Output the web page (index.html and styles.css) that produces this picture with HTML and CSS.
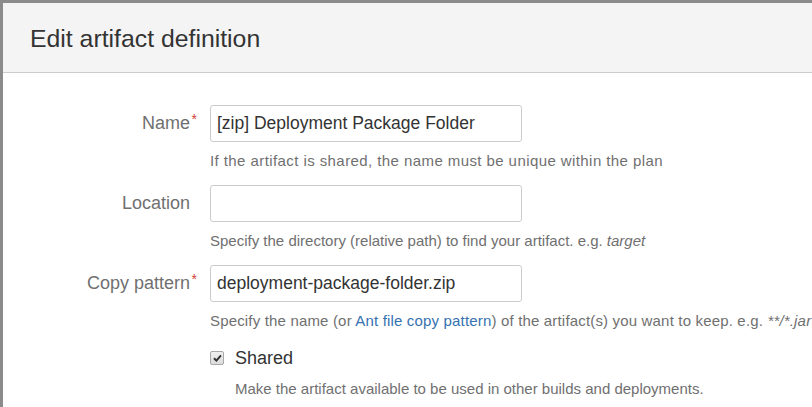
FILE: index.html
```html
<!DOCTYPE html>
<html>
<head>
<meta charset="utf-8">
<link rel="stylesheet" href="styles.css">
</head>
<body>
<div class="dialog">
  <div class="dialog-header">
    <h2 class="dialog-title">Edit artifact definition</h2>
  </div>
  <div class="dialog-body">
    <div class="field-group">
      <label class="field-label">Name<span class="required">*</span></label>
      <div class="field">
        <div class="text-input">[zip] Deployment Package Folder</div>
        <div class="description wide">If the artifact is shared, the name must be unique within the plan</div>
      </div>
    </div>
    <div class="field-group">
      <label class="field-label">Location</label>
      <div class="field">
        <div class="text-input"></div>
        <div class="description">Specify the directory (relative path) to find your artifact. e.g. <em>target</em></div>
      </div>
    </div>
    <div class="field-group">
      <label class="field-label">Copy pattern<span class="required">*</span></label>
      <div class="field">
        <div class="text-input">deployment-package-folder.zip</div>
        <div class="description mid">Specify the name (or <a class="link" href="#">Ant file copy pattern</a>) of the artifact(s) you want to keep. e.g. <em>**/*.jar</em></div>
      </div>
    </div>
    <div class="field-group">
      <div class="field-label"></div>
      <div class="field">
        <div class="checkbox-row">
          <span class="checkbox"><svg width="9" height="8" viewBox="0 0 9 8"><path d="M1 4.2 L3.4 6.6 L8 1.4" fill="none" stroke="#333" stroke-width="2"/></svg></span>
          <span class="checkbox-label">Shared</span>
        </div>
        <div class="description indent">Make the artifact available to be used in other builds and deployments.</div>
      </div>
    </div>
  </div>
</div>
</body>
</html>
```

FILE: styles.css
```css
html, body {
  margin: 0;
  padding: 0;
  height: 100%;
  overflow: hidden;
}
body {
  background: #8b8b8b;
  font-family: "Liberation Sans", Arial, sans-serif;
}
.dialog {
  margin: 3px 0 0 3px;
  background: #fff;
  height: 404px;
}
.dialog-header {
  background: #f4f4f4;
  height: 69px;
  border-bottom: 1px solid #cccccc;
  display: flex;
  align-items: center;
  padding-left: 27px;
}
.dialog-title {
  margin: 0;
  font-weight: normal;
  font-size: 24.8px;
  color: #333;
  position: relative;
  top: 1px;
}
.dialog-body {
  padding-top: 32px;
}
.field-group {
  display: flex;
  margin-bottom: 14px;
}
.field-label {
  width: 187px;
  flex: none;
  text-align: right;
  font-size: 18px;
  color: #707070;
  line-height: 37px;
  position: relative;
  padding-right: 20px;
  box-sizing: content-box;
}
.required {
  position: absolute;
  right: 13px;
  top: -4px;
  color: #d04437;
  font-size: 14px;
}
.field {
  flex: 1;
}
.text-input {
  width: 312px;
  height: 37px;
  box-sizing: border-box;
  border: 1px solid #cccccc;
  border-radius: 3px;
  font-size: 17.5px;
  color: #333;
  line-height: 35px;
  padding-left: 6px;
  white-space: nowrap;
}
.description {
  margin-top: 9px;
  font-size: 15px;
  line-height: 20px;
  color: #707070;
  white-space: nowrap;
}
.description.wide {
  letter-spacing: 0.42px;
}
.description.mid {
  letter-spacing: 0.17px;
}
.description em {
  font-style: italic;
}
.link {
  color: #3572b0;
  text-decoration: none;
}
.checkbox-row {
  display: flex;
  align-items: center;
  height: 26px;
  margin-top: 0;
}
.checkbox {
  width: 12px;
  height: 12px;
  border: 1px solid #a8a8a8;
  border-radius: 2px;
  background: linear-gradient(#f0f0f0, #dcdcdc);
  display: flex;
  align-items: center;
  justify-content: center;
  flex: none;
}
.checkbox-label {
  margin-left: 11px;
  font-size: 18px;
  color: #333;
}
.description.indent {
  margin-left: 25px;
  margin-top: 8px;
}
```
